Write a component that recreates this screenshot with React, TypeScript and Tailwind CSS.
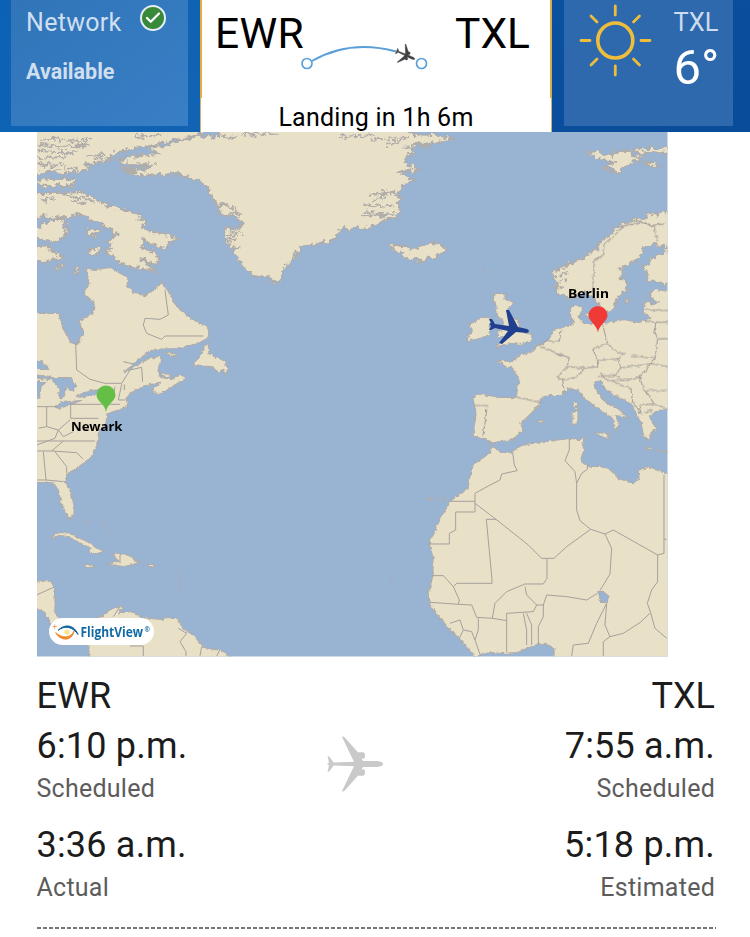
import { Check } from 'lucide-react';

interface StopTime {
  time: string;
  label: string;
}

interface StopColumnProps {
  code: string;
  times: StopTime[];
  align: 'left' | 'right';
}

const ARCTIC = [
  // Canadian arctic
  'M30 125H217L197 134L180 137L163 141L147 145L133 147L117 151L107 155L112 158L93 162L83 164L87 168L80 171L63 172L50 170L43 173L30 172Z',
  'M30 180L50 178L70 178L76 181L67 185L45 185L30 184Z',
  // Greenland
  'M115 159L130 156L147 153L158 152L145 147L163 145L180 139L197 136L217 134L225 125H402L412 133L430 134L452 137L437 142L415 143L410 148L412 153L404 157L402 162L410 165L420 168L397 171L404 175L413 180L400 184L398 192L397 202L399 212L390 218L367 226L341 228L335 235L327 241L310 243L297 248L292 258L283 267L280 277L278 283L267 277L253 275L243 267L235 255L228 245L222 237L223 228L240 225L237 217L220 213L215 204L212 197L205 185L195 178L173 173L140 175L127 171L147 168L152 165L122 162Z',
  // Baffin
  'M30 192L57 192L80 191L93 197L103 203L117 208L137 213L145 220L140 227L160 232L176 237L165 247L153 245L142 238L140 245L158 255L158 263L140 258L153 270L137 267L120 263L108 254L103 250L110 247L107 240L116 233L107 227L90 220L80 213L63 217L50 216L30 215Z',
  'M30 230L50 218L60 218L65 227L65 233L53 242L40 238L30 236Z',
  'M30 245L47 246L53 252L63 257L53 258L45 262L30 260Z',
  'M84 230L92 227L101 230L96 234L89 235Z',
  'M85 251L93 247L99 249L97 253L88 254Z',
  'M53 267L60 264L62 265L57 268Z',
  'M72 268L78 267L76 272Z',
  // Iceland
  'M388 243L400 245L410 248L420 244L433 241L445 247L438 255L417 260L402 256L403 251L390 250Z',
  // Svalbard
  'M583 152L597 151L610 155L613 150L627 150L631 154L642 156L630 161L617 172L603 167L613 161L597 158Z',
  'M627 149L640 147L675 147V153L640 152Z',
  'M643 162L650 161L657 164L650 166Z',
  // Scandinavia
  'M675 210L650 213L636 219L623 222L612 230L600 240L592 250L580 257L565 264L553 270L554 280L555 290L567 297L575 295L583 290L592 297L597 305L600 311L606 311L613 308L615 297L625 290L627 283L620 277L620 267L637 257L643 247L652 244L663 245L663 252L652 256L643 265L647 280L656 283L675 280Z',
];

const LAND = [
  // North America
  'M85 268L95 269L108 267L118 272L127 277L126 285L133 293L145 295L158 285L160 282L167 290L173 302L180 310L190 318L207 327L208 337L197 343L177 348L150 349L143 355L133 363L123 372L136 365L145 359L158 356L161 359L157 366L158 372L160 377L170 379L180 374L185 378L173 385L160 393L153 392L152 388L160 382L145 385L133 390L125 398L127 405L122 408L110 412L106 414L105 423L97 432L98 440L95 447L90 457L77 467L67 473L64 481L70 491L73 505L73 514L68 518L60 503L57 488L50 482L30 482V313H58L62 328L70 342L76 344L82 333L78 320L92 313L93 302L83 293L88 282Z',
  'M207 342L204 345L200 353L192 365L210 366L218 372L222 369L224 374L227 369L223 360L215 357L208 353Z',
  'M163 352L168 352L176 355L172 356Z',
  'M160 372L170 375L169 377L161 375Z',
  // Caribbean
  'M49 538L55 533L62 532L70 533L77 537L88 542L96 548L103 551L96 553L88 553L90 548L78 542L67 536L58 535Z',
  'M112 554L122 553L130 556L138 562L132 564L123 566L107 564L117 561L115 557Z',
  'M83 564L90 564L94 566L87 567Z',
  'M146 564L153 564L154 566L147 567Z',
  'M84 520L87 522L86 525Z',
  // Central and South America
  'M30 582L42 580L50 581L54 588L54 613L60 620L66 625L60 628L50 623L44 612L30 605Z',
  'M88 665V643L92 630L98 617L108 610L122 605L118 613L130 611L140 617L160 619L165 617L177 618L182 628L193 635L203 647L220 650L232 658V665Z',
  // British Isles
  'M493 293L505 293L503 298L513 303L505 310L509 316L517 320L520 328L523 332L531 334L530 340L522 344L510 343L500 345L495 348L499 341L505 338L496 336L497 331L503 328L500 318L495 313L495 305L492 300Z',
  'M466 340L468 333L472 330L468 324L474 321L482 316L490 318L488 335L475 339Z',
  // Continental Europe
  'M675 292L655 289L648 293L650 297L657 302L651 304L648 300L643 303L642 312L650 317L637 322L623 319L603 323L592 323L583 323L578 317L582 307L573 304L569 308L570 317L574 322L567 325L553 330L547 340L536 345L530 352L517 355L512 361L497 360L504 366L513 368L518 380L515 397L500 397L475 393L472 398L475 413L472 435L480 438L485 438L490 443L498 441L510 440L522 430L520 423L538 405L540 397L548 395L560 395L567 388L577 390L583 398L597 408L607 415L613 419L613 430L618 425L615 415L627 417L617 408L606 403L600 396L594 388L593 382L600 380L604 388L612 394L630 403L635 413L640 423L643 437L650 440L650 432L656 429L648 417L656 410L667 409L675 406Z',
  'M593 432L608 433L607 439L600 436Z',
  'M571 411L577 410L577 423L571 424Z',
  'M574 400L577 403L575 409L572 405Z',
  'M537 421L541 419L543 421L540 422Z',
  'M584 314L589 312L588 318Z',
  'M625 299L628 298L626 303Z',
  'M642 446L652 448L648 449Z',
  'M656 450L667 451L664 452Z',
  // Africa
  'M491 446L500 452L510 452L520 445L537 442L552 440L570 438L578 439L583 438L582 443L583 450L580 458L582 463L590 466L600 466L610 470L618 478L632 483L638 478L637 470L648 466L662 472L675 474V665H553V648L543 643L532 645L517 652L500 653L490 652L480 654L475 658L460 640L447 627L430 607L427 593L432 575L432 557L428 543L438 520L450 500L467 488L470 470L474 463L488 453Z',
  'M428 498L431 497L430 500ZM434 499L436 498L436 500ZM443 498L445 495L444 500Z',
];

const INLETS = [
  'M37 139L52 137L60 139L88 140M37 144L60 146L88 143M37 150L55 151L68 151M37 157L60 156L75 151M37 163L52 165L64 162M62 166L78 168',
  'M85 155L104 154M92 158L101 157M133 136L160 134M117 167L150 165M122 169L135 169',
  'M70 200L85 204M64 196L80 197L92 201M40 200L52 197M135 218L146 220M137 259L150 263',
  'M220 136L236 137M240 134L277 132M338 136L372 134M368 139L396 137M386 144L406 136M402 146L430 144',
  'M368 194L392 192L398 197M372 199L384 196M362 204L380 206L392 204M364 210L380 213L392 212M360 214L385 215M380 190L396 195',
  'M224 235L240 232M226 239L238 237M228 231L238 229M230 248L238 246M215 206L228 203M222 215L236 212',
  'M214 203L232 207L238 215M556 275L568 272M556 281L566 279M557 286L564 287',
];

const LAKES = [
  'M30 358L41 361L44 366L48 369L30 369Z',
  'M30 381L45 381L40 387L38 398L30 401Z',
  'M50 377L70 377L75 385L72 390L65 387L63 396L58 398L58 388L53 382Z',
  'M55 407L60 402L69 401L80 400L70 404L58 408Z',
  'M75 396L83 392L98 389L97 393L78 397Z',
  'M30 374L49 376L50 379L30 377Z',
  'M597 591L602 591L608 596L606 602L600 602Z',
];

// Political borders. Each group is in thirds of a map unit, offset to its region.
const BORDERS = [
  {
    at: 'translate(410 430) scale(.3333)',
    d: 'M308 67L313 105L322 122L275 132L270 150L235 168L195 190V246H137V300L118 310V342H55M120 214H195M195 220L258 268H229L246 448V460H140L130 470L100 437H65M258 268L355 345L395 385H432L470 350L542 298L510 272L500 240V160L495 125L465 92L478 60V27M500 160L515 130L532 118V100M542 298L585 312L610 300L743 375L762 370V135M743 375V455L725 480L712 520L722 548L690 578L640 610L600 620L585 585L590 520M585 312L605 355L600 432L570 482M411 387V445L400 462H345L290 485L255 520L247 565L200 562L185 525L145 523L60 517M145 523L148 510L130 470M345 470L350 495L380 525L400 525L410 495L470 500L530 510L562 490M400 525V560L385 590V640M380 525L370 545L290 550V665M350 550L365 585V645M340 550L350 600V645M247 565L290 572M205 565V600L195 630L212 678M120 580L150 570L160 600L148 625M160 600L185 605L195 630M590 520L560 580L535 640L490 645L485 678M600 620L580 635V678M722 548L735 595L770 625M762 328H770',
  },
  {
    at: 'translate(30 290) scale(.3333)',
    d: 'M137 160L140 240L180 268L225 280H275L300 240L335 232L338 275M280 215L310 222M405 0L415 75L390 88L345 85L340 105L350 130L395 148L405 138H520M20 350L80 350M120 343H215L225 330M122 345V385H205M50 350V410L25 415M50 410L85 420L120 390M85 420L100 440L130 425M20 453H195M100 453L65 483H20M65 483L140 488L160 508M75 485L110 530V550M40 485L48 570H20M48 570L100 575M275 283L265 330H285M240 343H270M255 290L250 320M20 465L75 445L85 420M283 283V300',
  },
  {
    at: 'translate(30 480) scale(.3333)',
    d: 'M20 345L70 322M270 225V250M270 380L250 410M445 445L470 460L450 485L468 515V528M515 500L510 528M570 510L560 528M340 528V498H300',
  },
];

// Borders that follow rivers and ridges, drawn with a rougher line.
const RIDGE_BORDERS = [
  {
    at: 'translate(450 280) scale(.3333)',
    d: 'M260 195L300 210L325 225L355 232L348 258L390 262L440 260L440 240L500 235L520 220L490 210L470 190L462 160L455 130M265 195L290 180L325 185L330 150M355 232L320 220M348 258L320 290L335 300L340 335M335 300L375 290L400 265M200 350L270 367M70 375H108L105 410L95 470M440 240L425 205L470 190M500 235L510 262L600 250L612 235L540 225M510 262L490 285L440 288M490 285L520 300L565 290L600 250M565 290L580 330H650M480 300L500 310L540 325L545 365M580 330L600 350L605 370L570 375L565 400M605 370L650 385M600 250L650 258M612 235L620 175L610 150L615 125L580 122M620 175H650M615 125H650M580 88L650 90M450 280L470 300L520 300M580 395L605 390M545 365L575 400',
  },
  {
    at: 'translate(450 130) scale(.3333)',
    d: 'M425 490L430 390L455 375L460 340L495 310L520 285L555 280L570 270L610 290L620 335M555 270L600 285L640 280',
  },
];

const PLANE =
  'M55 27.5c0-1.8-3-3-8-3H35.500L34 22h2.500c1.400 0 1.400-6-1.200-6h-5L17.500 1.500C16.500 0 14 0 15 1.500L26.500 25.300 6.500 26 2 20H.5L2 26.300 0 27.500 2 28.700.5 35H2l4.500-6 20 .7L15 53.500c-1 1.500 1.500 1.500 2.500 0L30.300 39h5c2.600 0 2.600-6 1.200-6H34l1.500-2.500H47c5 0 8-1.200 8-3z';

const ROUTE_MAP_PLANE =
  'M489 319L492 319L495 324L509 326L506 310L509 310L518 327L527 329Q531 331 527 333L516 332L502 344L499 343L508 331L495 328L491 330L489 330L491 326L489 324L491 323Z';

function NetworkTile() {
  return (
    <div className="bg-gradient-to-br from-[#0b62b5] to-[#1263b4] pl-[11px]">
      <div className="h-[126px] w-[177px] bg-gradient-to-br from-[#3175b8] to-[#387fc6] pl-[15px] text-[#d0dff0]">
        <div className="flex h-[45px] items-center">
          <span className="text-[25px] tracking-[0.3px]">Network</span>
          <span className="mb-[9px] ml-[18.5px] flex size-[26px] items-center justify-center rounded-full border-2 border-[#e5eef5] bg-[#39893b]">
            <Check className="size-[18px] text-white" strokeWidth={3} />
          </span>
        </div>
        <div className="mt-[12px] text-[21.5px] leading-[30px] font-bold">Available</div>
      </div>
    </div>
  );
}

function WeatherTile() {
  return (
    <div className="bg-gradient-to-br from-[#0a51a0] to-[#094c99] pl-[12px]">
      <div className="flex h-[126px] w-[169px] bg-[#2e69ad]">
        <svg className="h-[126px] w-[104px]" viewBox="564 0 104 126" fill="none" stroke="#edbd3b">
          <circle cx="615.300" cy="40.500" r="17.500" strokeWidth="3.600" />
          <path
            strokeWidth="2.800"
            strokeLinecap="round"
            d="M615.300 6V15M615.300 66V75M581 40.500H590M641 40.500H650M591 16L597 22M639.500 16L633.500 22M591 65L597 59M639.500 65L633.500 59"
          />
        </svg>
        <div className="pl-[5.5px] text-white">
          <div className="mt-[7px] text-[25.5px] leading-[31px] text-[#cddcee]">TXL</div>
          <div className="mt-[2px] text-[49px] leading-[55px]">6°</div>
        </div>
      </div>
    </div>
  );
}

function FlightSummary() {
  return (
    <div className="relative flex flex-col items-center bg-white text-black">
      <span className="absolute top-0 left-0 h-[98px] w-[2px] bg-[#e3ac3d]" />
      <span className="absolute top-0 right-0 h-[98px] w-[2px] bg-[#d5ac45]" />
      <span className="absolute top-[98px] right-0 h-[34px] w-px bg-[#c8b47a]" />
      <span className="absolute top-[98px] left-0 h-[34px] w-px bg-[#c8b47a]" />
      <div className="flex w-full justify-between pr-[22px] pl-[15px] text-[42.5px] leading-[67px]">
        <span className="tracking-[0.3px]">EWR</span>
        <span>TXL</span>
      </div>
      <svg className="absolute top-[36px] left-[98px] h-[40px] w-[136px]" viewBox="298 36 136 40" fill="none">
        <path d="M312 61Q350 39 396 51.500" stroke="#5b9fd9" strokeWidth="2" />
        <circle cx="307" cy="63.500" r="5" stroke="#5b9fd9" strokeWidth="1.700" />
        <circle cx="421.500" cy="63.500" r="5" stroke="#5b9fd9" strokeWidth="1.700" />
        <path
          d={PLANE}
          fill="#3f4043"
          stroke="#3f4043"
          strokeWidth="1"
          transform="translate(405.500 55) rotate(24) scale(.37) translate(-27.500 -27.500)"
        />
      </svg>
      <div className="mt-[36px] text-[25px] leading-[29px] tracking-[0.25px]">Landing in 1h 6m</div>
    </div>
  );
}

function RouteMap() {
  return (
    <svg className="ml-[37px] block h-[525px] w-[631px]" viewBox="37 132 631 525">
      <defs>
        <filter id="coast" x="0" y="0" width="1" height="1" colorInterpolationFilters="sRGB">
          <feTurbulence type="fractalNoise" baseFrequency=".2" numOctaves="3" seed="4" />
          <feDisplacementMap in="SourceGraphic" scale="10" xChannelSelector="R" yChannelSelector="G" />
        </filter>
        <filter id="shore" x="0" y="0" width="1" height="1" colorInterpolationFilters="sRGB">
          <feTurbulence type="fractalNoise" baseFrequency=".25" numOctaves="2" seed="8" />
          <feDisplacementMap in="SourceGraphic" scale="4" xChannelSelector="R" yChannelSelector="G" />
        </filter>
      </defs>
      <rect x="37" y="132" width="630.500" height="524.500" fill="#99b3d3" />
      <svg x="37" y="132" width="630.500" height="524.500" viewBox="37 132 630.500 524.500">
        <g filter="url(#coast)" transform="translate(1.500 1)" stroke="#b0aca9" strokeWidth="1.800" fill="#e8e1c8">
          {ARCTIC.map((d) => (
            <path key={d} d={d} />
          ))}
          {INLETS.map((d) => (
            <path key={d} d={d} fill="none" strokeWidth="2.200" />
          ))}
        </g>
        <g filter="url(#shore)" transform="translate(1 .5)" stroke="#b0aca9" strokeWidth="1.200" fill="#e8e1c8">
          {LAND.map((d) => (
            <path key={d} d={d} />
          ))}
          {LAKES.map((d) => (
            <path key={d} d={d} fill="#99b3d3" />
          ))}
        </g>
        <g fill="none" stroke="#a5a09b" strokeWidth="3">
          {BORDERS.map((b) => (
            <path key={b.at} transform={b.at} d={b.d} />
          ))}
        </g>
        <g filter="url(#shore)" transform="translate(1 .5)" fill="none" stroke="#a5a09b" strokeWidth="3.300">
          {RIDGE_BORDERS.map((b) => (
            <path key={b.at} transform={b.at} d={b.d} />
          ))}
        </g>
        <path
          d="M83 508L90 513M100 518L108 528L114 536M176 570L180 580L179 592M483 271L486 270M476 208L477 209M364 428L366 428M390 575L391 582M485 268L484 275"
          stroke="#a9acb8"
          fill="none"
        />
      </svg>
      <path d="M106 412C105 404 96.500 401 96.500 395A9.500 9.500 0 0 1 115.500 395C115.500 401 107 404 106 412Z" fill="#65be45" />
      <path d="M598 332.500C597 325 588.500 321 588.500 315.500A9.500 9.500 0 0 1 607.500 315.500C607.500 321 599 325 598 332.500Z" fill="#f03a37" />
      <path d={ROUTE_MAP_PLANE} fill="#213f8f" />
      <g className="font-['Noto_Sans',sans-serif] font-bold" fill="#000">
        <text x="71" y="431" textLength="51.500" lengthAdjust="spacingAndGlyphs" className="text-[13px]">
          Newark
        </text>
        <text x="568" y="298" textLength="41" lengthAdjust="spacingAndGlyphs" className="text-[12.5px]">
          Berlin
        </text>
      </g>
      <rect x="49" y="618" width="105" height="27" rx="13.500" fill="#fff" />
      <g fill="none" strokeLinecap="round">
        <path d="M58.500 630C64 624 74 624 78 634.500C73 627 65 625 58.500 630Z" fill="#0b6499" stroke="#0b6499" />
        <path d="M56 633C60 641 72 642 74 631C71 638 63 639 56 633Z" fill="#f08a2c" stroke="#f08a2c" />
        <path d="M53 626.500H56.500M54.700 624.800V628.300" stroke="#f3a564" />
        <circle cx="67" cy="632" r="2.600" fill="#fae38b" />
      </g>
      <g className="font-['Open_Sans',sans-serif] font-bold" fill="#1169a6">
        <text x="80.500" y="637" textLength="62.500" lengthAdjust="spacingAndGlyphs" className="text-[13.5px]">
          FlightView
        </text>
        <text x="144.500" y="632" className="text-[6.5px]">
          ®
        </text>
      </g>
    </svg>
  );
}

function StopColumn({ code, times, align }: StopColumnProps) {
  return (
    <div className={align === 'right' ? 'text-right' : 'text-left'}>
      <div className="text-[36px] leading-[42px]">{code}</div>
      {times.map((t) => (
        <div key={t.label} className="mb-[9px] pt-[5px]">
          <div className="text-[36px] leading-[48px] tracking-[0.2px]">{t.time}</div>
          <div className="pt-px text-[25px] leading-[36px] tracking-[0.25px] text-[#5c5c5c]">{t.label}</div>
        </div>
      ))}
    </div>
  );
}

export default function App() {
  return (
    <div className="h-[937px] w-[750px] overflow-hidden bg-white font-[Roboto,sans-serif] text-[#1c1c1c]">
      <header className="grid h-[132px] grid-cols-[200px_352px_198px] grid-rows-[132px]">
        <NetworkTile />
        <FlightSummary />
        <WeatherTile />
      </header>
      <RouteMap />
      <section className="mr-[35px] ml-[36.5px] grid h-[272px] grid-cols-[250px_137px_1fr] pt-[18px]">
        <StopColumn
          code="EWR"
          align="left"
          times={[
            { time: '6:10 p.m.', label: 'Scheduled' },
            { time: '3:36 a.m.', label: 'Actual' },
          ]}
        />
        <svg className="mt-[61px] ml-[40.5px] h-[56px] w-[56px]" viewBox="0 0 55 55" fill="#c9c9c9">
          <path d={PLANE} />
        </svg>
        <StopColumn
          code="TXL"
          align="right"
          times={[
            { time: '7:55 a.m.', label: 'Scheduled' },
            { time: '5:18 p.m.', label: 'Estimated' },
          ]}
        />
      </section>
      <div className="mr-[34px] ml-[37px] -mt-[2px] h-[2px] bg-[repeating-linear-gradient(90deg,#777_0_4px,transparent_4px_6px)]" />
    </div>
  );
}
